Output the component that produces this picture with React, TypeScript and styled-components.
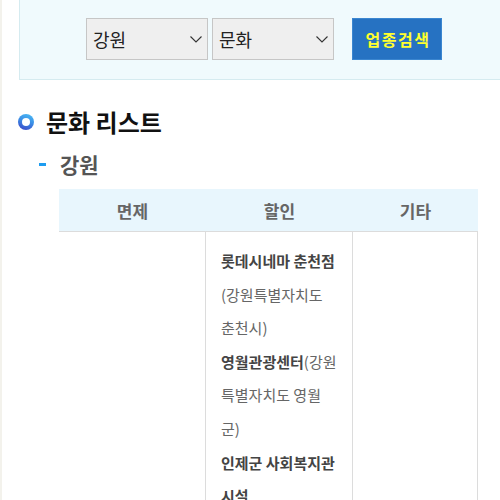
import React from 'react';
import styled, { createGlobalStyle } from 'styled-components';

const GlobalStyle = createGlobalStyle`
  html, body {
    margin: 0;
    padding: 0;
    background: #fff;
    overflow: hidden;
  }
  body {
    font-family: "Noto Sans CJK KR", "Noto Sans", sans-serif;
    color: #333;
  }
`;

const regions = ['강원', '서울', '경기', '부산'];
const categories = ['문화', '음식', '숙박', '의료'];

const discounts = [
  { name: '롯데시네마 춘천점', addr: '(강원특별자치도 춘천시)' },
  { name: '영월관광센터', addr: '(강원특별자치도 영월군)' },
  { name: '인제군 사회복지관 시설', addr: '' },
];

export default function App() {
  return (
    <>
      <GlobalStyle />
      <Page>
        <SearchBox>
          <SelectWrap>
            <Select defaultValue="강원">
              {regions.map((r) => (
                <option key={r}>{r}</option>
              ))}
            </Select>
            <Chevron />
          </SelectWrap>
          <SelectWrap>
            <Select defaultValue="문화">
              {categories.map((c) => (
                <option key={c}>{c}</option>
              ))}
            </Select>
            <Chevron />
          </SelectWrap>
          <SearchButton type="button">업종검색</SearchButton>
        </SearchBox>

        <Title>
          <Ring />
          문화 리스트
        </Title>
        <SubTitle>
          <Dash />
          강원
        </SubTitle>

        <Table>
          <colgroup>
            <col style={{ width: 147 }} />
            <col style={{ width: 147 }} />
            <col style={{ width: 125 }} />
          </colgroup>
          <thead>
            <tr>
              <Th>면제</Th>
              <Th>할인</Th>
              <Th>기타</Th>
            </tr>
          </thead>
          <tbody>
            <tr>
              <Td />
              <Td>
                {discounts.map((d) => (
                  <Entry key={d.name}>
                    <strong>{d.name}</strong>
                    {d.addr}
                  </Entry>
                ))}
              </Td>
              <Td />
            </tr>
          </tbody>
        </Table>
      </Page>
    </>
  );
}

function Chevron() {
  return (
    <ChevronIcon width="12" height="7" viewBox="0 0 12 7" fill="none">
      <path d="M0.5 0.5 L6 6 L11.5 0.5" stroke="#333" strokeWidth="1.1" />
    </ChevronIcon>
  );
}

const Page = styled.div`
  border-left: 2px solid #f3f2ec;
  padding-left: 17px;
  min-height: 500px;
  box-sizing: border-box;
`;

const SearchBox = styled.div`
  display: flex;
  justify-content: center;
  align-items: center;
  gap: 4px;
  margin-right: -9px;
  padding: 18px 0 19px;
  background: #f0fafd;
  border: 1px solid #d5ebf0;
  border-top: none;
`;

const SelectWrap = styled.div`
  position: relative;
  width: 122px;
  height: 42px;
`;

const Select = styled.select`
  appearance: none;
  width: 100%;
  height: 100%;
  margin: 0;
  padding: 0 24px 0 6px;
  box-sizing: border-box;
  border: 1px solid #c6c6c6;
  border-radius: 0;
  background: #efefef;
  color: #222;
  font-family: "Noto Sans CJK KR", sans-serif;
  font-size: 18px;
  outline: none;
`;

const ChevronIcon = styled.svg`
  position: absolute;
  top: 18px;
  right: 6px;
  pointer-events: none;
`;

const SearchButton = styled.button`
  width: 90px;
  height: 42px;
  margin-left: 14px;
  padding: 0 0 0 2px;
  border: 1px solid #3b86d0;
  background: #2672c2;
  color: #ffff2e;
  font-family: "Noto Sans CJK KR", sans-serif;
  font-size: 16px;
  font-weight: 700;
  letter-spacing: 1.5px;
  cursor: pointer;
`;

const Title = styled.h2`
  display: flex;
  align-items: center;
  gap: 12px;
  margin: 27px 0 0 -1px;
  font-size: 24px;
  line-height: 30px;
  font-weight: 700;
  color: #111;
`;

const Ring = styled.span`
  position: relative;
  width: 16px;
  height: 16px;
  border-radius: 50%;
  background: linear-gradient(200deg, #4cc0f6 0%, #3b8fe6 45%, #3a3fc4 100%);
  flex: none;

  &::after {
    content: '';
    position: absolute;
    inset: 4px;
    border-radius: 50%;
    background: #fff;
  }
`;

const SubTitle = styled.h3`
  display: flex;
  align-items: center;
  gap: 14px;
  margin: 13px 0 0 20px;
  font-size: 21px;
  line-height: 28px;
  font-weight: 700;
  color: #555;
`;

const Dash = styled.span`
  width: 7px;
  height: 3px;
  background: #1d9cf0;
  flex: none;
`;

const Table = styled.table`
  margin: 11px 0 0 40px;
  width: 419px;
  table-layout: fixed;
  border-collapse: separate;
  border-spacing: 0;
`;

const Th = styled.th`
  height: 42px;
  padding: 0;
  background: #e8f6fd;
  border-bottom: 1px solid #dcdcdc;
  color: #666;
  font-size: 17px;
  font-weight: 700;
  text-align: center;
  vertical-align: middle;
`;

const Td = styled.td`
  padding: 12px 13px 0 15px;
  border-right: 1px solid #dcdcdc;
  vertical-align: top;
  color: #666;
  font-size: 15px;
  line-height: 33.6px;
`;

const Entry = styled.div`
  strong {
    color: #444;
    font-weight: 700;
  }
`;
